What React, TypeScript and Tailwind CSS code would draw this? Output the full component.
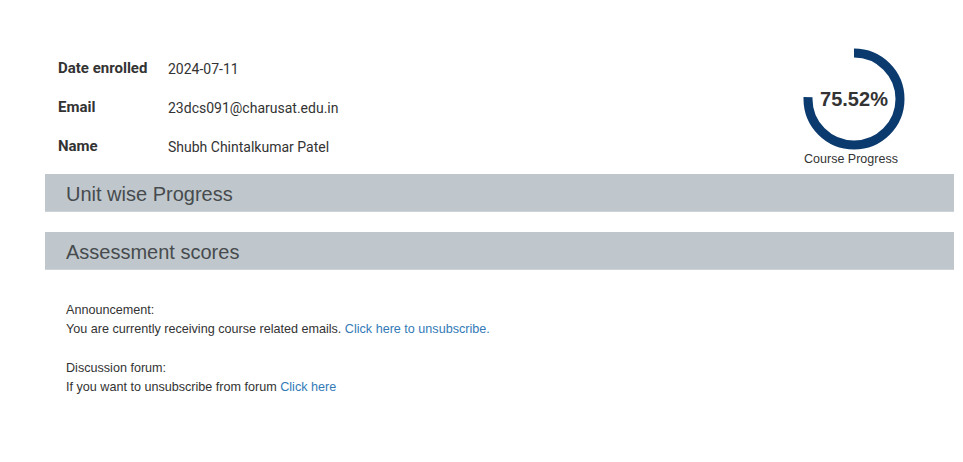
import { FC } from 'react'

const rows = [
  { label: 'Date enrolled', value: '2024-07-11' },
  { label: 'Email', value: '23dcs091@charusat.edu.in' },
  { label: 'Name', value: 'Shubh Chintalkumar Patel' },
]

const ProgressRing: FC<{ percent: number }> = ({ percent }) => {
  const r = 46
  const c = 2 * Math.PI * r
  const dash = (percent / 100) * c
  return (
    <div className="relative w-[104px] h-[104px]">
      <svg width="104" height="104" viewBox="0 0 104 104">
        <circle
          cx="52"
          cy="52"
          r={r}
          fill="none"
          stroke="#0b3a6f"
          strokeWidth="9"
          strokeDasharray={`${dash} ${c}`}
          transform="rotate(-90 52 52)"
        />
      </svg>
      <div className="absolute inset-0 flex items-center justify-center text-[20px] font-bold text-[#333] font-['Liberation_Sans',Arial,sans-serif]">
        {percent}%
      </div>
    </div>
  )
}

const SectionBar: FC<{ title: string }> = ({ title }) => (
  <div className="h-[38px] bg-[#bfc7cc] border-b border-[#cdd3d7] flex items-center pl-[21px] pt-[3px] text-[20px] text-[#474b4e] font-['Liberation_Sans',Arial,sans-serif]">
    {title}
  </div>
)

export default function App() {
  return (
    <div className="w-[963px] h-[462px] bg-white">
      <div className="ml-[45px] w-[909px]">
        <div className="flex justify-between h-[174px]">
          <div className="pt-[58px] pl-[13px] font-['Roboto',sans-serif] text-[#333]">
            {rows.map((r) => (
              <div key={r.label} className="flex h-[39px] leading-[20px]">
                <div className="w-[110px] font-bold text-[15px]">{r.label}</div>
                <div className="mt-[1px] text-[14px]">{r.value}</div>
              </div>
            ))}
          </div>
          <div className="pt-[47px] mr-[48px] flex flex-col items-center">
            <ProgressRing percent={75.52} />
            <div className="mt-[1px] text-[12.5px] leading-[14px] text-[#333] font-['Liberation_Sans',Arial,sans-serif] -ml-[6px]">
              Course Progress
            </div>
          </div>
        </div>

        <SectionBar title="Unit wise Progress" />
        <div className="h-[20px]" />
        <SectionBar title="Assessment scores" />

        <div className="pl-[21px] pt-[31px] text-[12.6px] leading-[19px] text-[#333] font-['Liberation_Sans',Arial,sans-serif]">
          <div>Announcement:</div>
          <div>
            You are currently receiving course related emails.{' '}
            <a href="#" className="text-[#337ab7]">
              Click here to unsubscribe.
            </a>
          </div>
          <div className="mt-[20px]">Discussion forum:</div>
          <div>
            If you want to unsubscribe from forum{' '}
            <a href="#" className="text-[#337ab7]">
              Click here
            </a>
          </div>
        </div>
      </div>
    </div>
  )
}
